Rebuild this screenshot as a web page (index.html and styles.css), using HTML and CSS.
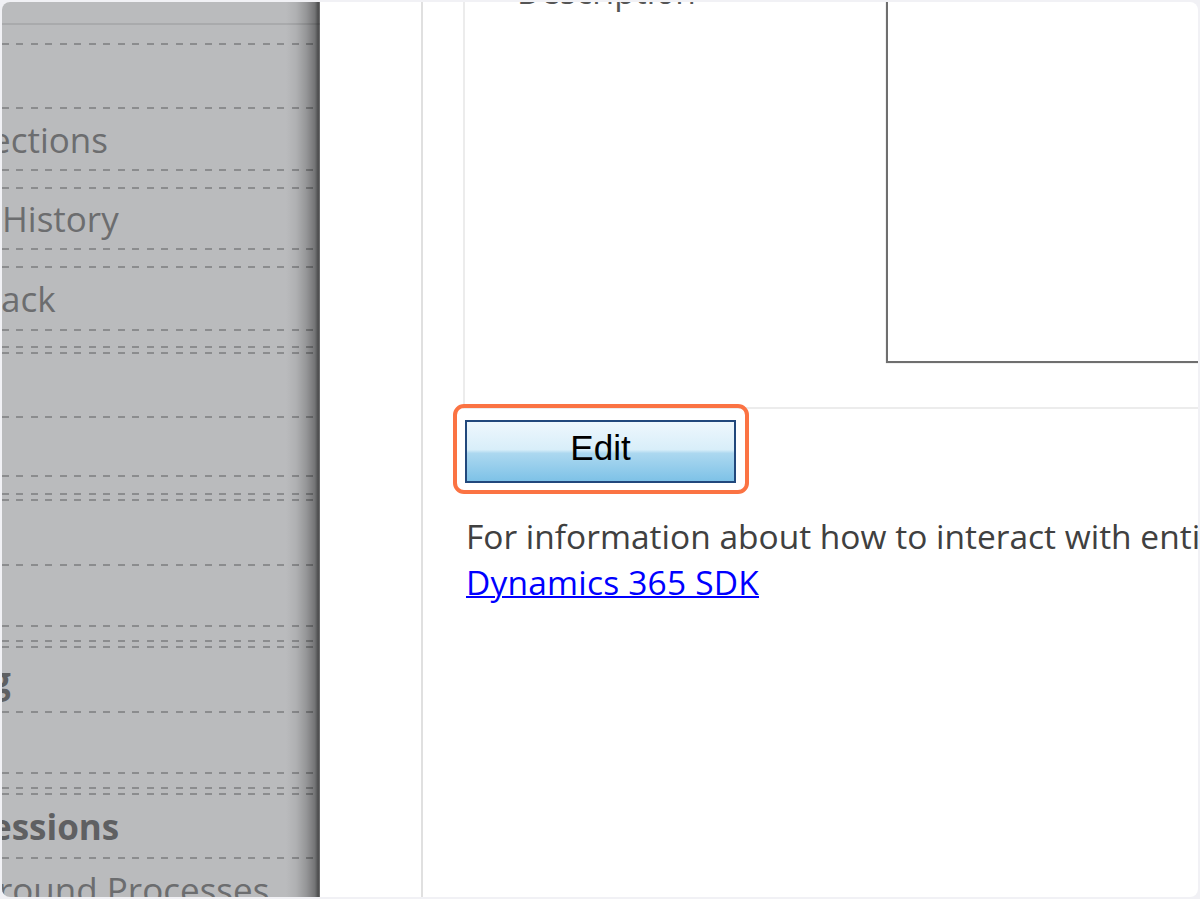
FILE: index.html
```html
<!DOCTYPE html>
<html lang="en">

<head>
    <meta charset="UTF-8">
    <meta name="viewport" content="width=device-width, initial-scale=1.0">
    <title>Record - Edit</title>
    <link rel="stylesheet" href="styles.css">
</head>

<body>
    <div class="frame">
        <aside class="nav">
            <div class="rule"></div>
            <div class="dash gap-18"></div>
            <div class="dash gap-62"></div>
            <div class="nav-item h60 cut-e">ections</div>
            <div class="dash"></div>
            <div class="dash gap-16"></div>
            <div class="nav-item h59">History</div>
            <div class="dash"></div>
            <div class="dash gap-16"></div>
            <div class="nav-item h61 cut-a">ack</div>
            <div class="dash"></div>
            <div class="dash-double gap-15"></div>
            <div class="dash gap-62"></div>
            <div class="dash gap-57"></div>
            <div class="dash-double gap-16"></div>
            <div class="dash gap-63"></div>
            <div class="dash gap-59"></div>
            <div class="dash-double gap-13"></div>
            <div class="nav-item h63 bold cut-g">g</div>
            <div class="dash"></div>
            <div class="dash gap-59"></div>
            <div class="dash-double gap-13"></div>
            <div class="nav-item h62 bold cut-e">essions</div>
            <div class="dash"></div>
            <div class="nav-item h60 cut-r">round Processes</div>
        </aside>

        <div class="gutter"></div>

        <main class="content">
            <section class="form-section">
                <div class="field">
                    <div class="field-label">Description</div>
                    <div class="field-box"></div>
                </div>
            </section>

            <div class="edit-ring">
                <button type="button" class="edit-btn">Edit</button>
            </div>

            <p class="sdk-note">
                For information about how to interact with entity records using code, see the<br>
                <a href="#">Dynamics 365 SDK</a>
            </p>
        </main>
    </div>
</body>

</html>
```

FILE: styles.css
```css
body {
    margin: 0;
    background-color: #f1f1f5;
    font-family: "Open Sans", Arial, sans-serif;
}

.frame {
    display: flex;
    margin: 2px;
    height: 895px;
    background: #fff;
    border-radius: 8px;
    overflow: hidden;
}

/* greyed-out navigation on the left */
.nav {
    position: relative;
    flex: 0 0 318px;
    background-color: #babbbd;
    color: #6c6d6f;
    font-size: 35px;
    overflow: hidden;
}

.nav::after {
    content: "";
    position: absolute;
    top: 0;
    right: 0;
    bottom: 0;
    width: 34px;
    background: linear-gradient(90deg,
        rgba(0, 0, 0, 0) 0%,
        rgba(0, 0, 0, 0.06) 30%,
        rgba(0, 0, 0, 0.2) 60%,
        rgba(0, 0, 0, 0.38) 85%,
        rgba(0, 0, 0, 0.6) 95%,
        rgba(0, 0, 0, 0.35) 100%);
}

.rule {
    margin-top: 21px;
    height: 2px;
    background-color: #a9aaac;
}

.dash,
.dash-double {
    background-image:
        repeating-linear-gradient(90deg, #8b8c8e 0 7px, transparent 7px 14.5px),
        repeating-linear-gradient(90deg, #8b8c8e 0 7px, transparent 7px 14.5px);
    background-size: 100% 2px;
    background-repeat: no-repeat;
    background-position: 0 0, 0 100%;
}

.dash {
    height: 2px;
}

.dash-double {
    height: 8px;
}

.gap-13 { margin-top: 13px; }
.gap-15 { margin-top: 15px; }
.gap-16 { margin-top: 16px; }
.gap-18 { margin-top: 18px; }
.gap-57 { margin-top: 57px; }
.gap-59 { margin-top: 59px; }
.gap-62 { margin-top: 62px; }
.gap-63 { margin-top: 63px; }

.nav-item {
    display: flex;
    align-items: center;
    white-space: nowrap;
}

.nav-item.bold {
    font-weight: 700;
    color: #5f6062;
}

.h59 { height: 59px; }
.h60 { height: 60px; }
.h61 { height: 61px; }
.h62 { height: 62px; }
.h63 { height: 63px; }

.cut-e { text-indent: -11px; }
.cut-a { text-indent: -1px; }
.cut-g { text-indent: -11px; }
.cut-r { text-indent: -4px; }

.gutter {
    flex: 0 0 101px;
    border-right: 2px solid #e0e0e0;
}

/* form area */
.content {
    flex: 1;
    min-width: 0;
    padding-left: 40px;
    color: #404040;
    font-size: 33.5px;
    white-space: nowrap;
}

.form-section {
    height: 405px;
    border-left: 2px solid #ececec;
    border-bottom: 2px solid #ececec;
}

.field {
    display: flex;
}

.field-label {
    flex: 0 0 369px;
    padding-left: 52px;
    margin-top: -31px;
    line-height: 40px;
    color: #555;
}

.field-box {
    flex: 1;
    box-sizing: border-box;
    height: 381px;
    margin-top: -20px;
    border: 2px solid #6f6f6f;
    border-right: none;
    box-shadow: 0 0 1px #aaa;
}

.edit-ring {
    width: fit-content;
    margin: -5px 0 0 -10px;
    padding: 12px 9px 7px 8px;
    border: 4px solid #fb7343;
    border-radius: 11px;
}

.edit-btn {
    display: block;
    box-sizing: border-box;
    width: 271px;
    height: 63px;
    padding: 0 0 8px;
    border: 2px solid #21487c;
    background: linear-gradient(#eef7fd 0%, #d8eef9 47%, #acd8f0 53%, #7ec2e7 100%);
    font-family: "Liberation Sans", Arial, sans-serif;
    font-size: 35px;
    color: #000;
    cursor: pointer;
}

.sdk-note {
    margin: 19px 0 0 3px;
    line-height: 46px;
}

.sdk-note a {
    color: #0000ff;
    letter-spacing: 0.2px;
    text-decoration-thickness: 2px;
}
```
